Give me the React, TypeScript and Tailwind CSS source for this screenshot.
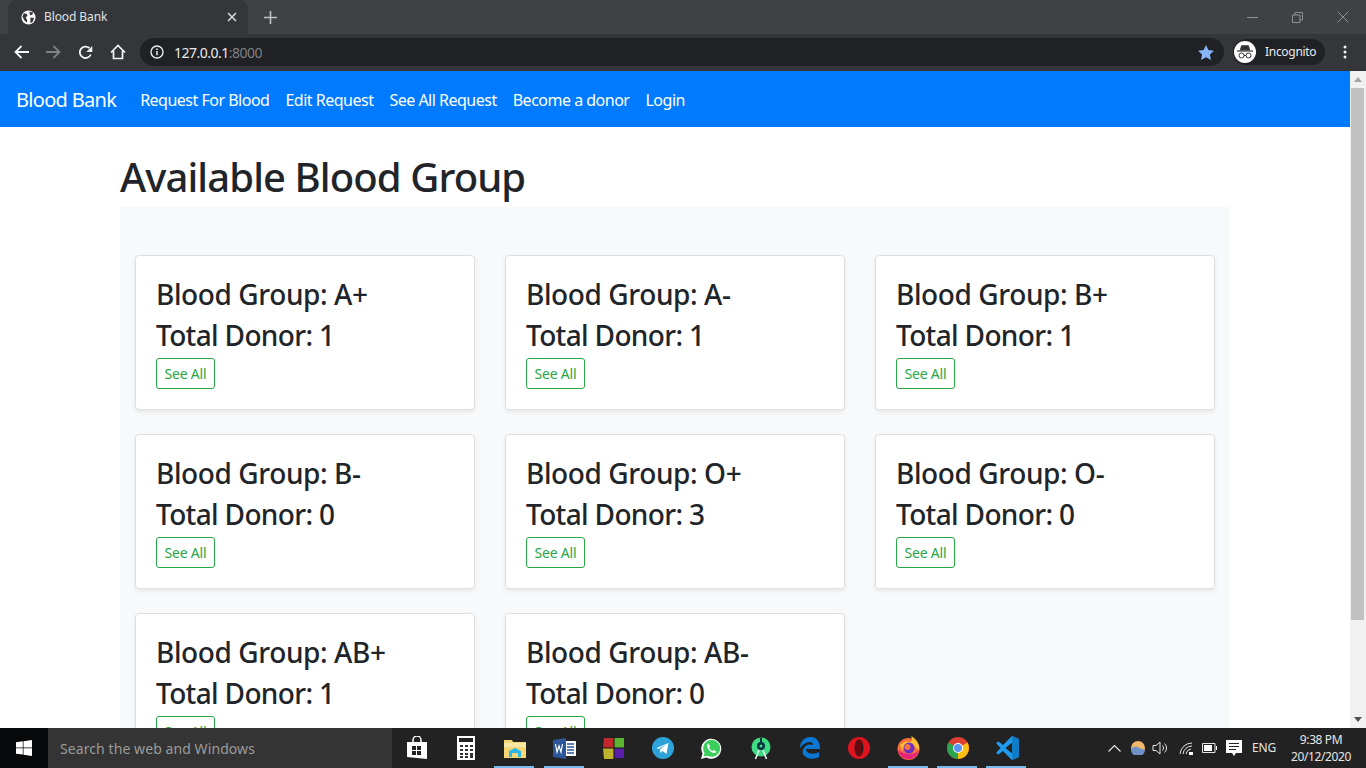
import React from "react";

const groups = [
  ["A+", 1], ["A-", 1], ["B+", 1], ["B-", 0], ["O+", 3], ["O-", 0], ["AB+", 1], ["AB-", 0],
] as const;

const ui = { fontFamily: '"Noto Sans", "Open Sans", Arial, sans-serif' };

function Card({ g, n }: { g: string; n: number }) {
  return (
    <div className="h-[155px] rounded-[4px] border border-[#dfdfdf] bg-white px-5 pt-[22px] shadow-[0_2px_4px_rgba(0,0,0,0.075)]">
      <div className="mb-[7px] text-[28px] leading-[33.6px] font-medium text-[#212529] tracking-[-0.4px]">Blood Group: {g}</div>
      <div className="mb-[6px] text-[28px] leading-[33.6px] font-medium text-[#212529] tracking-[-0.65px]">Total Donor: {n}</div>
      <div className="flex h-[31px] w-[59px] items-center justify-center rounded-[3px] border border-[#28a745] text-[14px] tracking-[-0.2px] text-[#28a745]">See All</div>
    </div>
  );
}

function Chrome() {
  return (
    <div className="flex h-[71px] shrink-0 flex-col bg-[#35363a]" style={ui}>
      <div className="flex h-[34px] items-center bg-[#3f4245]">
        <div className="ml-2 flex h-[34px] w-[240px] items-center rounded-t-lg bg-[#35363a] pl-[13px] pr-[11px]">
          <svg width="15" height="15" viewBox="0 0 16 16"><circle cx="8" cy="8" r="7.5" fill="#fff"/><path d="M3 3.500l3 .5 1 2-2 2 1.500 2.500v3L3.500 11 1.500 7zM9 1.500l4 1.500-1 2-2.500.5zM10 8l4 .5-1.500 4L10 14z" fill="#35363a"/></svg>
          <span className="ml-[8px] flex-1 text-[12px] tracking-[-0.1px] text-[#dee1e6]">Blood Bank</span>
          <svg width="10" height="10" viewBox="0 0 10 10"><path d="M1 1l8 8M9 1L1 9" stroke="#d5d7da" strokeWidth="1.600"/></svg>
        </div>
        <svg className="ml-[16px]" width="13" height="13" viewBox="0 0 13 13"><path d="M6.500 0v13M0 6.500h13" stroke="#bdc1c6" strokeWidth="1.600"/></svg>
        <div className="ml-auto flex h-[28px] items-center pr-[17px]">
          <svg width="11" height="11" viewBox="0 0 11 11"><path d="M0 5.500h11" stroke="#8e9194"/></svg>
          <svg className="ml-[34px]" width="11" height="11" viewBox="0 0 11 11" fill="none" stroke="#8e9194"><path d="M.5 3h7.500v7.500H.5zM3 3V.5h7.500V8H8"/></svg>
          <svg className="ml-[34px]" width="12" height="12" viewBox="0 0 12 12"><path d="M.5.500l11 11M11.500.5l-11 11" stroke="#8e9194"/></svg>
        </div>
      </div>
      <div className="flex h-[37px] items-center pb-[1px]">
        <svg className="ml-[14px]" width="15" height="14" viewBox="0 0 15 14" fill="none" stroke="#f1f3f4" strokeWidth="1.800"><path d="M15 7H1.500M7.500 1l-6 6 6 6"/></svg>
        <svg className="ml-[17px]" width="15" height="14" viewBox="0 0 15 14" fill="none" stroke="#808285" strokeWidth="1.800"><path d="M0 7h13.500M7.500 1l6 6-6 6"/></svg>
        <svg className="ml-[17px]" width="15" height="15" viewBox="0 0 15 15" fill="none"><path d="M12.800 9.500A5.700 5.700 0 1 1 11.500 3.200" stroke="#f1f3f4" strokeWidth="1.800"/><path d="M14.300 1v6h-6z" fill="#f1f3f4"/></svg>
        <svg className="ml-[17px]" width="16" height="16" viewBox="0 0 16 16" fill="none" stroke="#f1f3f4" strokeWidth="1.700"><path d="M1 8.500L8 1.500l7 7M3.500 7v7.500h9V7"/></svg>
        <div className="ml-[14px] flex h-[28px] w-[1084px] items-center rounded-full bg-[#202124] pl-[10px] pr-[10px]">
          <svg width="14" height="14" viewBox="0 0 14 14" fill="none"><circle cx="7" cy="7" r="6" stroke="#e8eaed" strokeWidth="1.400"/><path d="M7 6v4.200M7 3.500v1.500" stroke="#e8eaed" strokeWidth="1.500"/></svg>
          <span className="ml-[10px] text-[14px] tracking-[-0.5px] text-[#e8eaed]">127.0.0.1<span className="text-[#7d8084]">:8000</span></span>
          <svg className="ml-auto" width="16" height="15" viewBox="0 0 16 15"><path d="M8 0l2.400 5.100 5.600.7-4.100 3.800 1.100 5.400L8 12.300 3 15l1.100-5.400L0 5.800l5.600-.7z" fill="#8ab4f8"/></svg>
        </div>
        <div className="ml-[9px] flex h-[26px] w-[92px] items-center rounded-full bg-[#202124] pl-[1px]">
          <div className="flex h-[22px] w-[22px] items-center justify-center rounded-full bg-white">
            <svg width="16" height="14" viewBox="0 0 16 14" fill="none" stroke="#333"><path d="M3.500 5L4.500 .8h7L12.500 5z" fill="#333"/><path d="M0 6h16" strokeWidth="1.200"/><circle cx="4.500" cy="10.500" r="2.500"/><circle cx="11.500" cy="10.500" r="2.500"/><path d="M7 10.500h2"/></svg>
          </div>
          <span className="ml-[9px] text-[12px] tracking-[-0.3px] text-[#e8eaed]">Incognito</span>
        </div>
        <svg className="ml-[18px]" width="4" height="14" viewBox="0 0 4 14" fill="#f1f3f4"><circle cx="2" cy="2" r="1.500"/><circle cx="2" cy="7" r="1.500"/><circle cx="2" cy="12" r="1.500"/></svg>
      </div>
    </div>
  );
}

function Scrollbar() {
  return (
    <div className="flex w-4 shrink-0 flex-col items-center bg-[#f1f1f1]">
      <svg className="mt-[6px]" width="8" height="5" viewBox="0 0 8 5"><path d="M4 0l4 5H0z" fill="#a3a3a3"/></svg>
      <div className="mt-[6px] ml-px h-[532px] w-[13px] self-start bg-[#c1c1c1]" />
      <svg className="mt-auto mb-[6px]" width="8" height="5" viewBox="0 0 8 5"><path d="M4 5l4-5H0z" fill="#505050"/></svg>
    </div>
  );
}

const icons: React.ReactNode[] = [
  <svg width="22" height="24" viewBox="0 0 22 24"><path d="M7 6V4a4 4 0 0 1 8 0v2" fill="none" stroke="#fff" strokeWidth="1.500"/><path d="M1 6h20v17L1 21z" fill="#fff"/><path d="M6 10h4v4H6zM11 10h4v4h-4zM6 15h4v4H6zM11 15h4v4h-4z" fill="#222"/></svg>,
  <svg width="18" height="24" viewBox="0 0 18 24"><path d="M0 0h18v24H0z" fill="#fff"/><path d="M2 2h14v4H2z" fill="#222"/><path d="M3 9h3v2H3zM8 9h3v2H8zM13 9h3v2h-3zM3 13h3v2H3zM8 13h3v2H8zM13 13h3v2h-3zM3 17h3v2H3zM8 17h3v2H8zM13 17h3v5h-3zM3 20h3v2H3zM8 20h3v2H8z" fill="#333"/></svg>,
  <svg width="22" height="19" viewBox="0 0 22 19"><path d="M0 1h8l1 2h13v16H0z" fill="#f4d675"/><path d="M0 4h22v4H0z" fill="#fbe8a6"/><path d="M5 18v-6L11 9l6 3v6h-3v-4H8v4z" fill="#29b6e8"/></svg>,
  <svg width="23" height="21" viewBox="0 0 23 21"><path d="M8 3h15v15H8z" fill="#fff"/><path d="M14 6h7M14 9h7M14 12h7M14 15h7" stroke="#2b5797" strokeWidth="1.500"/><path d="M0 2l13-2v21L0 19z" fill="#2b579a"/><path d="M2.500 6l1.500 8 2-6 2 6 1.500-8" fill="none" stroke="#fff" strokeWidth="1.200"/></svg>,
  <svg width="21" height="22" viewBox="0 0 21 22"><path d="M1 1h10v10H0z" fill="#c1272d"/><path d="M11 1h10v10H11z" fill="#5cb531"/><path d="M0 11h11v11H1z" fill="#bdb42c"/><path d="M11 11h10v10H11z" fill="#5a1ea8"/><path d="M11 0v22M0 11h21" stroke="#111"/></svg>,
  <svg width="22" height="22" viewBox="0 0 22 22"><circle cx="11" cy="11" r="11" fill="#2ea3da"/><path d="M4.500 11l12-5-2 11-4-3-2 2-.5-3.500 6-5-7.500 4.500z" fill="#fff"/></svg>,
  <svg width="23" height="23" viewBox="0 0 23 23"><path d="M1 22l1.500-5.500a10 10 0 1 1 4 4z" fill="#fff"/><path d="M3.500 19.500l1-3.500a8.500 8.500 0 1 1 3 2.800z" fill="#3ccf5e"/><path d="M8 6.500c-2 2-.5 5 1.500 7s5 3.500 7 1.500l-2.500-2-1.500 1c-1.500-.8-2.500-1.800-3.300-3.300l1-1.500z" fill="#fff"/></svg>,
  <svg width="20" height="23" viewBox="0 0 20 23"><circle cx="10" cy="10" r="9.500" fill="#3ddc84"/><path d="M4.500 22L8 13M15.500 22L12 13" stroke="#e8f5ee" strokeWidth="1.600"/><circle cx="10" cy="9" r="4" fill="#073042"/><circle cx="10" cy="9" r="1.500" fill="#3ddc84"/><path d="M10 1v4" stroke="#073042" strokeWidth="2"/></svg>,
  <svg width="20" height="22" viewBox="0 0 20 22"><path d="M0 11C0 3 6 0 11 0c6 0 9 5 9 12H6c0 5 8 6 13 3v5c-6 3-13 2-16-3C1.500 14 5 5 13 8c0-2-1-3-3-3-4 0-8 3-10 6z" fill="#0a78d4"/></svg>,
  <svg width="22" height="22" viewBox="0 0 22 22"><circle cx="11" cy="11" r="11" fill="#e0131f"/><ellipse cx="11" cy="11" rx="4.500" ry="8.500" fill="#222"/><ellipse cx="11" cy="11" rx="3" ry="8" fill="#70070e"/></svg>,
  <svg width="23" height="24" viewBox="0 0 23 24"><circle cx="11.500" cy="13" r="11" fill="#f9703b"/><path d="M2 6l2 3c2-4 7-4 9-3 3-1 2-4 1-6 6 3 9 9 8 14l-8-6-9 6z" fill="#ffbf2e"/><path d="M1 14c1 7 8 10 12 9 4 0 8-4 9-9-5 6-14 5-21 0z" fill="#e6247b"/><circle cx="12" cy="12" r="5.500" fill="#6b2fc9"/><circle cx="10.500" cy="11" r="3" fill="#f9703b"/></svg>,
  <svg width="22" height="22" viewBox="0 0 22 22"><circle cx="11" cy="11" r="11" fill="#dc3e31"/><path d="M11 11L1.500 5.500A11 11 0 0 0 11 22z" fill="#2aa44f"/><path d="M11 11V22A11 11 0 0 0 20.500 5.500z" fill="#fbc013"/><circle cx="11" cy="11" r="5" fill="#fff"/><circle cx="11" cy="11" r="4" fill="#5c95f2"/></svg>,
  <svg width="24" height="24" viewBox="0 0 24 24"><path d="M17 0l7 3v18l-7 3-9-9-4.500 3.500L1 17l4.500-5L1 7l2.500-1.500L8 9z" fill="#1f9cf0"/><path d="M17 0l7 3v18l-7 3V0z" fill="#0e7cc7"/><path d="M17 6.500v11L10.500 12z" fill="#222"/></svg>,
];
const active = [2, 3, 10, 11, 12];

function Taskbar() {
  return (
    <div className="flex h-10 shrink-0 items-center bg-[#222222]" style={ui}>
      <div className="flex h-10 w-12 items-center justify-center bg-[#08090a]">
        <svg width="16" height="16" viewBox="0 0 16 16" fill="#fff"><path d="M0 2.300l6.800-1V7.500H0zM7.500 1.200L16 0v7.500H7.500zM0 8.300h6.800v6.300L0 13.700zM7.500 8.300H16V16l-8.500-1.200z"/></svg>
      </div>
      <div className="flex h-10 w-[344px] items-center bg-[#343434] pl-3 text-[14px] tracking-[0.08px] text-[#9b9b9b]">Search the web and Windows</div>
      <div className="flex h-10">
        {icons.map((ic, i) => (
          <div key={i} className="relative flex h-10 w-[49.2px] items-center justify-center">
            {ic}
            {active.includes(i) && <div className="absolute bottom-0 left-[4px] h-[2px] w-[40px] bg-[#76b9ed]" />}
          </div>
        ))}
      </div>
      <div className="ml-auto flex h-10 items-center text-[#e6e6e6]">
        <svg width="13" height="8" viewBox="0 0 13 8" fill="none" stroke="#e6e6e6" strokeWidth="1.200"><path d="M.5 7.500l6-6 6 6"/></svg>
        <svg className="ml-[10px]" width="14" height="14" viewBox="0 0 14 14"><circle cx="7" cy="7" r="7" fill="#f1b969"/><path d="M0 8c3-3 6-3 7-1.500 2 1.500 5 1 7 2.500A7 7 0 0 1 0 8z" fill="#6f93c9"/></svg>
        <svg className="ml-[7px]" width="16" height="14" viewBox="0 0 16 14" fill="none" stroke="#e6e6e6"><path d="M1 4.500h3L8 1v12L4 9.500H1zM10.500 4.500a3.500 3.500 0 0 1 0 5M12.500 2.500a6 6 0 0 1 0 9"/></svg>
        <svg className="ml-[11px]" width="14" height="14" viewBox="0 0 14 14" fill="none" stroke="#e6e6e6"><path d="M1 13A12 12 0 0 1 13 2M4 13a9 9 0 0 1 9-8M7 13a6 6 0 0 1 5-5"/><path d="M10 11h4v3h-4z" fill="#fff" stroke="none"/></svg>
        <svg className="ml-[9px]" width="15" height="10" viewBox="0 0 15 10"><path d="M.5.500h12.500v9H.5z" fill="none" stroke="#e6e6e6"/><path d="M2 2h8v6H2zM14 3h1v4h-1z" fill="#fff"/></svg>
        <svg className="ml-[9px]" width="16" height="16" viewBox="0 0 16 16"><path d="M0 0h16v13h-6l-2 3-2-3H0z" fill="#fff"/><path d="M3 3.500h10M3 6.500h10M3 9.500h7" stroke="#222"/></svg>
        <span className="ml-[10px] text-[12px] tracking-[-0.2px]">ENG</span>
        <div className="ml-[6px] flex w-[78px] flex-col items-center text-[12px] leading-[17px] tracking-[-0.4px]">
          <span>9:38 PM</span>
          <span>20/12/2020</span>
        </div>
        <div className="w-[6px]" />
      </div>
    </div>
  );
}

export default function App() {
  return (
    <div className="flex h-[768px] w-[1366px] flex-col overflow-hidden bg-white" style={ui}>
      <Chrome />
      <div className="flex min-h-0 flex-1">
        <div className="min-w-0 flex-1 overflow-hidden">
          <nav className="flex h-14 items-center bg-[#007bff] pl-4 text-white">
            <span className="mr-4 pt-[2px] text-[20px] tracking-[-0.7px]">Blood Bank</span>
            <div className="flex pt-[1px] text-[16px] tracking-[-0.5px]">
              {["Request For Blood", "Edit Request", "See All Request", "Become a donor", "Login"].map((t) => (
                <span key={t} className="px-2">{t}</span>
              ))}
            </div>
          </nav>
          <div className="mx-[120px] w-[1110px]">
            <h1 className="mb-[6px] pt-[26px] text-[40px] leading-[48px] font-medium text-[#212529] tracking-[-0.9px]">Available Blood Group</h1>
            <div className="grid grid-cols-3 gap-x-[30px] gap-y-6 bg-[#f8f9fa] px-[15px] pt-12 pb-6">
              {groups.map(([g, n]) => <Card key={g} g={g} n={n} />)}
            </div>
          </div>
        </div>
        <Scrollbar />
      </div>
      <Taskbar />
    </div>
  );
}
